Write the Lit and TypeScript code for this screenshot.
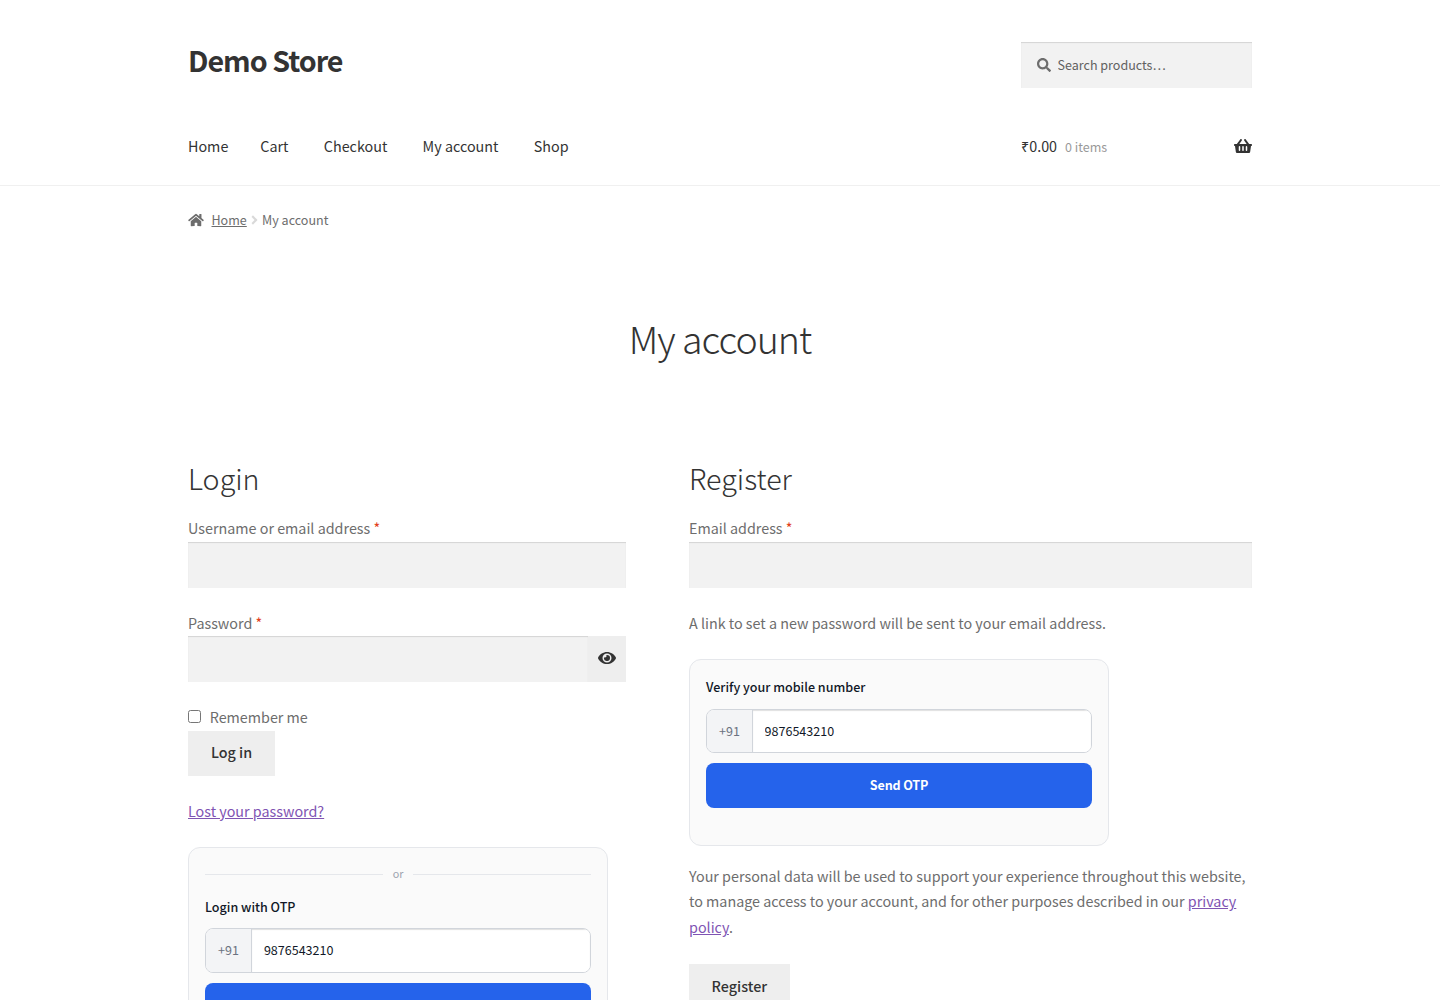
import { LitElement, css, html, svg } from "lit";
import { customElement, property } from "lit/decorators.js";

const ICONS: Record<string, { width: number; path: string }> = {
  search: {
    width: 512,
    path: "M505 442.7L405.3 343c-4.5-4.5-10.6-7-17-7H372c27.6-35.3 44-79.7 44-128C416 93.1 322.9 0 208 0S0 93.1 0 208s93.1 208 208 208c48.3 0 92.7-16.4 128-44v16.3c0 6.4 2.5 12.5 7 17l99.7 99.7c9.4 9.4 24.6 9.4 33.9 0l28.3-28.3c9.4-9.4 9.4-24.6.1-34zM208 336c-70.7 0-128-57.2-128-128 0-70.7 57.2-128 128-128 70.7 0 128 57.2 128 128 0 70.7-57.2 128-128 128z",
  },
  home: {
    width: 576,
    path: "M280.37 148.26L96 300.11V464a16 16 0 0 0 16 16l112.06-.29a16 16 0 0 0 15.92-16V368a16 16 0 0 1 16-16h64a16 16 0 0 1 16 16v95.64a16 16 0 0 0 16 16.05L464 480a16 16 0 0 0 16-16V300L295.67 148.26a12.19 12.19 0 0 0-15.3 0zM571.6 251.47L488 182.56V44.05a12 12 0 0 0-12-12h-56a12 12 0 0 0-12 12v72.61L318.47 43a48 48 0 0 0-61 0L4.34 251.47a12 12 0 0 0-1.6 16.9l25.5 31A12 12 0 0 0 45.15 301l235.22-193.74a12.19 12.19 0 0 1 15.3 0L530.9 301a12 12 0 0 0 16.9-1.6l25.5-31a12 12 0 0 0-1.7-16.93z",
  },
  basket: {
    width: 576,
    path: "M576 216v16c0 13.255-10.745 24-24 24h-8l-26.113 182.788C514.509 462.435 494.257 480 470.37 480H105.63c-23.887 0-44.139-17.565-47.518-41.212L32 256h-8c-13.255 0-24-10.745-24-24v-16c0-13.255 10.745-24 24-24h67.341l106.78-146.821c10.395-14.292 30.407-17.453 44.701-7.058 14.293 10.395 17.453 30.408 7.058 44.701L170.477 192h235.046L326.12 82.821c-10.395-14.292-7.234-34.306 7.059-44.701 14.291-10.395 34.306-7.235 44.701 7.058L484.659 192H552c13.255 0 24 10.745 24 24zM312 392V280c0-13.255-10.745-24-24-24s-24 10.745-24 24v112c0 13.255 10.745 24 24 24s24-10.745 24-24zm112 0V280c0-13.255-10.745-24-24-24s-24 10.745-24 24v112c0 13.255 10.745 24 24 24s24-10.745 24-24zm-224 0V280c0-13.255-10.745-24-24-24s-24 10.745-24 24v112c0 13.255 10.745 24 24 24s24-10.745 24-24z",
  },
  eye: {
    width: 576,
    path: "M572.52 241.4C518.29 135.59 410.93 64 288 64S57.68 135.64 3.48 241.41a32.35 32.35 0 0 0 0 29.19C57.71 376.41 165.07 448 288 448s230.32-71.64 284.52-177.41a32.35 32.35 0 0 0 0-29.19zM288 400a144 144 0 1 1 144-144 143.93 143.93 0 0 1-144 144zm0-240a95.31 95.31 0 0 0-25.31 3.79 47.85 47.85 0 0 1-66.9 66.9A95.78 95.78 0 1 0 288 160z",
  },
  angle: {
    width: 256,
    path: "M224.3 273l-136 136c-9.4 9.4-24.6 9.4-33.9 0l-22.6-22.6c-9.4-9.4-9.4-24.6 0-33.9l96.4-96.4-96.4-96.4c-9.4-9.4-9.4-24.6 0-33.9L54.3 103c9.4-9.4 24.6-9.4 33.9 0l136 136c9.5 9.4 9.5 24.6.1 34z",
  },
};

const icon = (name: string) => html`
  <svg class="icon ${name}" viewBox="0 0 ${ICONS[name].width} 512">
    ${svg`<path fill="currentColor" d=${ICONS[name].path} />`}
  </svg>
`;

@customElement("otp-box")
export class OtpBox extends LitElement {
  @property({ type: String })
  heading = "";

  /**
   * Shows the "or" separator above the heading
   */
  @property({ type: Boolean })
  divider = false;

  render() {
    return html`
      ${this.divider ? html`<div class="divider"><span>or</span></div>` : ""}
      <div class="heading">${this.heading}</div>
      <div class="phone">
        <span class="prefix">+91</span>
        <input class="number" type="tel" value="9876543210" />
      </div>
      <button class="send">Send OTP</button>
      <div class="status"></div>
    `;
  }

  static styles = css`
    :host {
      display: block;
      box-sizing: border-box;
      width: 420px;
      padding: 16px;
      border: 1px solid #e5e7eb;
      border-radius: 12px;
      background: #fafafa;
      font-size: 12.54px;
      line-height: 22.65px;
    }
    .divider {
      display: flex;
      align-items: center;
      gap: 10px;
      height: 19.4px;
      margin-bottom: 12px;
      color: #9ca3af;
      font-size: 10.75px;
      line-height: 19.4px;
    }
    .divider::before,
    .divider::after {
      content: "";
      flex: 1;
      height: 1px;
      background: #e5e7eb;
    }
    .heading {
      margin-bottom: 10px;
      color: #111827;
      font-weight: 500;
    }
    .phone {
      display: flex;
      box-sizing: border-box;
      height: 44.4px;
      margin-bottom: 10px;
      overflow: hidden;
      border: 1px solid #d1d5db;
      border-radius: 8px;
      background: #fff;
    }
    .prefix {
      display: flex;
      align-items: center;
      padding: 0.6px 11.7px 0 12px;
      border-right: 1px solid #d1d5db;
      background: #f3f4f6;
      color: #6b7280;
    }
    .number {
      flex: 1;
      min-width: 0;
      padding: 0.6px 12px 0;
      border: 0;
      outline: 0;
      background: #fff;
      box-shadow: inset 0 1px 1px rgba(0, 0, 0, 0.125);
      color: #111827;
      font: inherit;
    }
    :host([divider]) .prefix,
    :host([divider]) .number {
      padding-top: 0;
      padding-bottom: 0.6px;
    }
    :host([divider]) .prefix {
      padding-right: 12px;
    }
    .send {
      display: block;
      width: 100%;
      height: 44.6px;
      padding: 0;
      border: 0;
      border-radius: 8px;
      background: #2563eb;
      color: #fff;
      font: inherit;
      font-weight: 700;
      letter-spacing: -0.15px;
    }
    .status {
      height: 21px;
    }
  `;
}

@customElement("app-root")
export class AppRoot extends LitElement {
  render() {
    return html`
      <header class="header">
        <div class="wrap top">
          <div class="brand">Demo Store</div>
          <div class="finder">
            ${icon("search")}
            <input class="query" type="search" placeholder="Search products…" />
          </div>
        </div>
        <div class="wrap bar">
          <nav class="nav">
            ${["Home", "Cart", "Checkout", "My account", "Shop"].map(
              (item) => html`<a class="item">${item}</a>`
            )}
          </nav>
          <div class="cart">
            <span>₹0.00</span>
            <span class="count">0 items</span>
            ${icon("basket")}
          </div>
        </div>
      </header>
      <div class="wrap crumbs">
        ${icon("home")}
        <a class="crumb">Home</a>
        ${icon("angle")}
        <span>My account</span>
      </div>
      <main class="wrap">
        <h1 class="title">My account</h1>
        <div class="columns">
          <section class="login">
            <h2 class="subtitle">Login</h2>
            <label class="label"
              >Username or email address <span class="required">*</span></label
            >
            <input class="field" type="text" />
            <label class="label"
              >Password <span class="required">*</span></label
            >
            <div class="password">
              <input class="field" type="password" />
              <button class="toggle">${icon("eye")}</button>
            </div>
            <label class="remember">
              <input class="check" type="checkbox" />
              <span>Remember me</span>
            </label>
            <button class="button">Log in</button>
            <p class="lost"><a class="link">Lost your password?</a></p>
            <otp-box heading="Login with OTP" divider></otp-box>
          </section>
          <section class="register">
            <h2 class="subtitle">Register</h2>
            <label class="label"
              >Email address <span class="required">*</span></label
            >
            <input class="field" type="email" />
            <p class="note">
              A link to set a new password will be sent to your email address.
            </p>
            <otp-box heading="Verify your mobile number"></otp-box>
            <p class="privacy">
              Your personal data will be used to support your experience
              throughout this website, to manage access to your account, and for
              other purposes described in our
              <a class="link">privacy policy</a>.
            </p>
            <button class="button">Register</button>
          </section>
        </div>
      </main>
    `;
  }

  static styles = css`
    :host {
      display: block;
      height: 1000px;
      overflow: hidden;
      background: #fff;
      color: #6d6d6d;
      font-family: "Noto Sans CJK SC", "Noto Sans", sans-serif;
      font-size: 14.33px;
      line-height: 25.89px;
    }
    .wrap {
      width: 1064px;
      margin: 0 auto;
    }
    .icon {
      display: block;
      flex: none;
    }
    .header {
      box-sizing: border-box;
      height: 186px;
      padding-top: 42px;
      border-bottom: 1px solid #f0f0f0;
      color: #333;
    }
    .top {
      display: flex;
      justify-content: space-between;
      height: 91px;
    }
    .brand {
      height: 35px;
      font-size: 28.67px;
      font-weight: 700;
      letter-spacing: -1px;
      line-height: 35px;
    }
    .finder {
      display: flex;
      align-items: center;
      box-sizing: border-box;
      width: 231px;
      height: 46px;
      padding-left: 16px;
      gap: 6.5px;
      background: #f2f2f2;
      box-shadow: inset 0 1px 1px rgba(0, 0, 0, 0.125);
      color: #6d6d6d;
    }
    .search {
      width: 14px;
      height: 14px;
    }
    .query {
      flex: 1;
      min-width: 0;
      padding: 0;
      border: 0;
      outline: 0;
      background: none;
      font: inherit;
      font-size: 12.54px;
    }
    .query::placeholder {
      color: #616161;
    }
    .bar {
      display: flex;
      justify-content: space-between;
    }
    .nav {
      display: flex;
      gap: 35.3px;
    }
    .item:first-child {
      margin-right: -3.3px;
    }
    .cart {
      display: flex;
      align-items: center;
      width: 231px;
    }
    .count {
      margin-left: 8px;
      padding-top: 2px;
      font-size: 12.54px;
      line-height: 23.89px;
      opacity: 0.5;
    }
    .basket {
      width: 18px;
      height: 16px;
      margin-left: auto;
    }
    .crumbs {
      display: flex;
      align-items: center;
      height: 23px;
      padding-top: 22px;
      font-size: 12.54px;
    }
    .home {
      width: 16px;
      height: 14px;
      margin-right: 7.5px;
    }
    .crumb {
      text-decoration: underline;
    }
    .angle {
      width: 7px;
      height: 14px;
      margin: 0 4.3px 0 4px;
      opacity: 0.25;
    }
    .title {
      margin: 81px 0 0;
      color: #333;
      font-size: 37.5px;
      font-weight: 300;
      letter-spacing: -1px;
      line-height: 51px;
      text-align: center;
    }
    .columns {
      display: flex;
      justify-content: space-between;
      padding-top: 95px;
    }
    .login {
      width: 438px;
    }
    .register {
      width: 563px;
    }
    .subtitle {
      margin: 0 0 18.7px;
      color: #333;
      font-size: 28.67px;
      font-weight: 300;
      line-height: 39px;
    }
    .label {
      display: block;
      margin: -0.5px 0 0.5px;
    }
    .required {
      color: #e2401c;
    }
    .field {
      display: block;
      box-sizing: border-box;
      width: 100%;
      height: 46px;
      margin-bottom: 22.8px;
      padding: 0 10px;
      border: 0;
      outline: 0;
      background: #f2f2f2;
      box-shadow: inset 0 1px 1px rgba(0, 0, 0, 0.125);
      font: inherit;
    }
    .password {
      display: flex;
      height: 46px;
      margin-bottom: 22.1px;
    }
    .password .field {
      flex: 1;
    }
    .toggle {
      display: flex;
      align-items: center;
      justify-content: center;
      width: 38px;
      padding: 0 0 2px 0.8px;
      border: 0;
      background: #eee;
      color: #333;
    }
    .eye {
      width: 18px;
      height: 16px;
    }
    .remember {
      display: flex;
      align-items: center;
      gap: 8.7px;
      margin-bottom: 0.5px;
    }
    .check {
      width: 13px;
      height: 13px;
      margin: 0 0 2px;
    }
    .button {
      display: block;
      height: 45px;
      padding: 0 22.6px 1px;
      border: 0;
      background: #eee;
      color: #333;
      font: inherit;
      font-weight: 500;
    }
    .login .button {
      padding: 0 22.9px 2px;
    }
    .lost {
      margin: 22.2px 0 23.5px;
    }
    .link {
      color: #7f54b3;
      text-decoration: underline;
    }
    .note {
      margin: -0.5px 0 23.2px;
    }
    .privacy {
      margin: 17px 0 23.6px;
    }
  `;
}

declare global {
  interface HTMLElementTagNameMap {
    "app-root": AppRoot;
    "otp-box": OtpBox;
  }
}
